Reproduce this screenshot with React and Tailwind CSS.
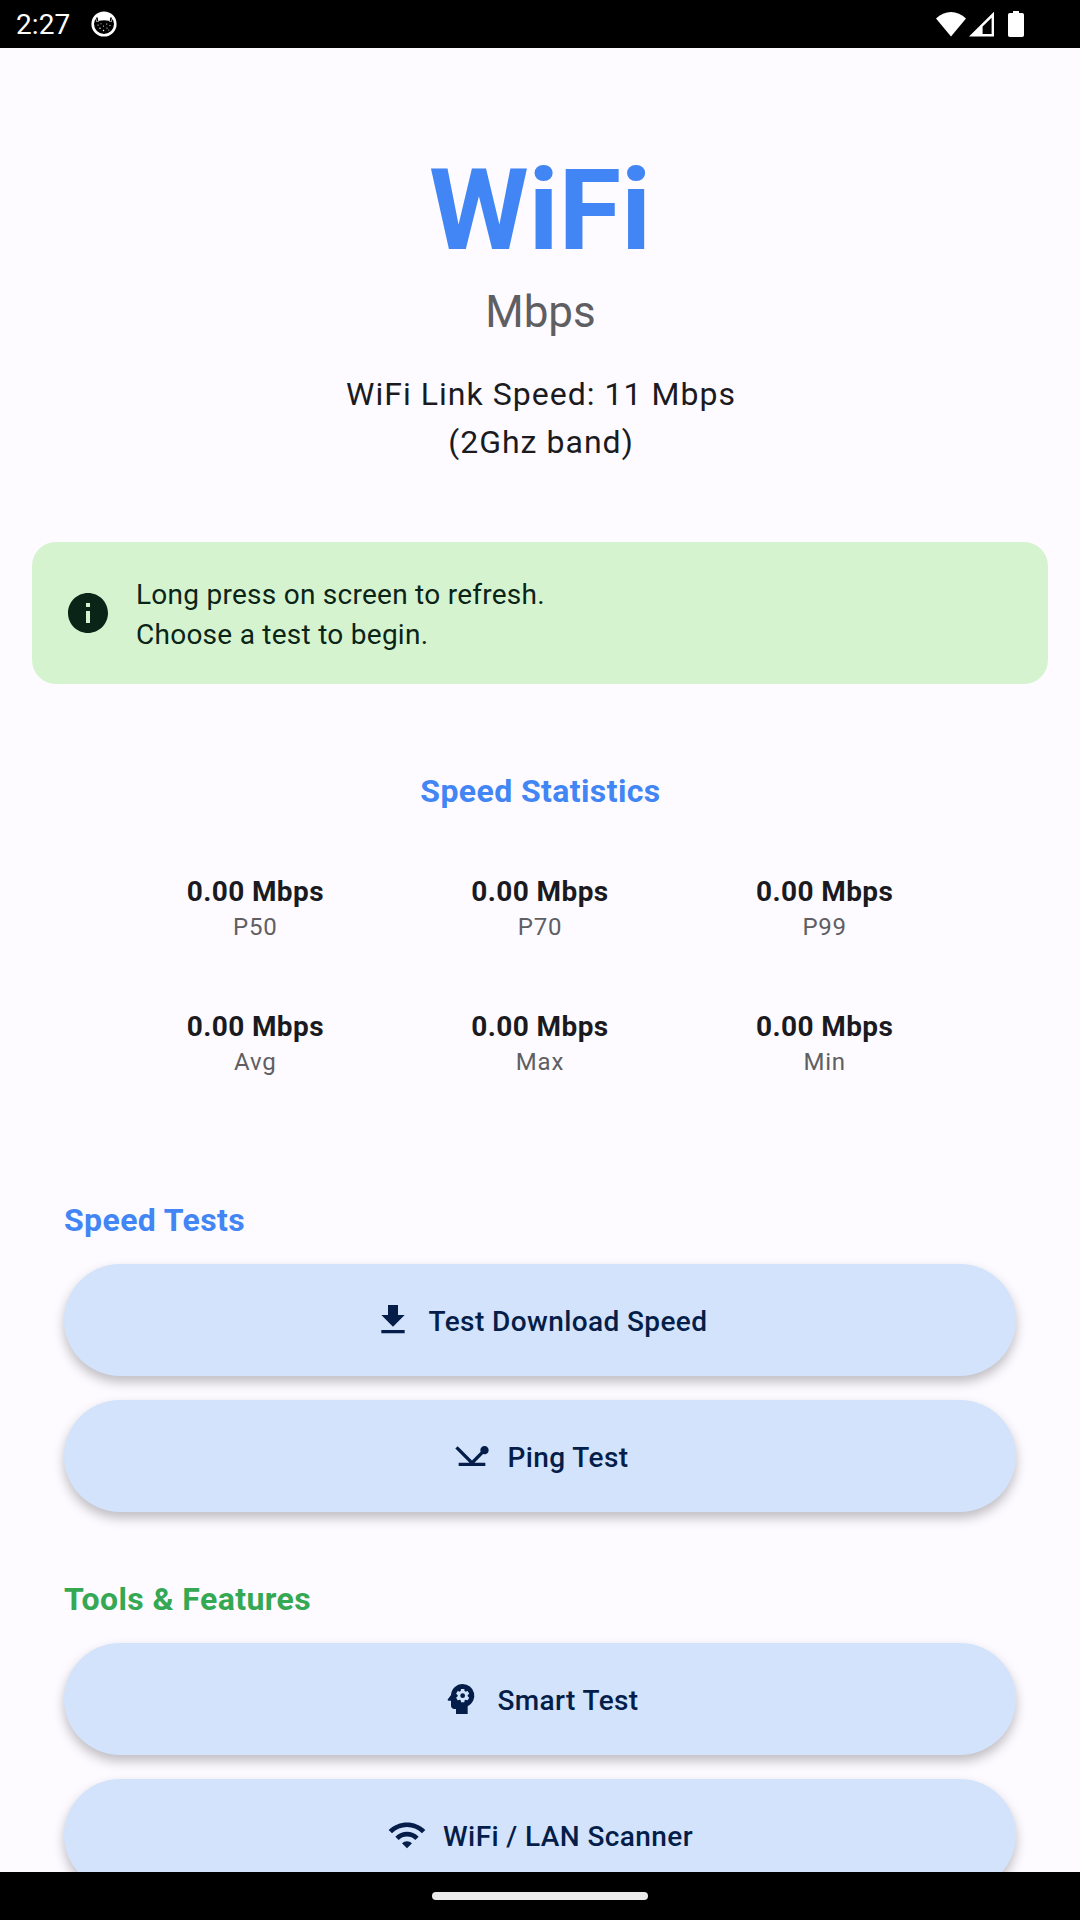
import React from "react";
import { MdInfo, MdFileDownload, MdNetworkPing, MdPsychology, MdWifi } from "react-icons/md";

function StatusBar() {
  return (
    <header className="flex h-12 shrink-0 items-center justify-between bg-black pl-4 pr-14 text-white">
      <div className="flex items-center">
        <span className="w-[75px] pt-0.5 text-[28px] leading-[34px] tracking-[0.1px]">2:27</span>
        <svg className="h-[26px] w-[26px]" viewBox="0 0 26 26">
          <circle cx="13" cy="13" r="11.3" fill="black" stroke="white" strokeWidth="2.6" />
          <path d="M4 7 C8 0 18 0 22 7 L20.5 11 C19.5 11.3 18.5 11 17.8 9.7 Q13 8.6 8.2 9.7 C7.5 11 6.5 11.3 5.5 11 Z" fill="white" />
          <path d="M5.8 6.5l.8 4M20.2 6.5l-.8 4" stroke="black" strokeWidth="1.6" />
          <g fill="white">
            <circle cx="7" cy="14" r=".6" /><circle cx="10" cy="12.8" r=".5" />
            <circle cx="15.8" cy="13" r=".6" /><circle cx="19" cy="14.5" r=".6" />
            <circle cx="12.5" cy="15" r=".6" /><circle cx="9" cy="17.3" r=".7" />
            <circle cx="16" cy="17" r=".6" /><circle cx="12.5" cy="19.5" r=".7" />
            <circle cx="17.8" cy="19" r=".5" />
          </g>
        </svg>
      </div>
      <div className="flex items-center">
        <svg className="h-[26px] w-[30px]" viewBox="0 0 30 26">
          <path d="M0 7.5C8.500-1.3 21.5-1.3 30 7.5L15 25.5z" fill="white" />
        </svg>
        <svg className="ml-[3px] h-[26px] w-[25px]" viewBox="0 0 25 26">
          <path fillRule="evenodd" d="M0 25.5L25 .7V25.5zM13.6 23H22.6V6.8L13.6 15.6z" fill="white" />
        </svg>
        <svg className="ml-[14px] h-[26px] w-4" viewBox="0 0 16 26">
          <path d="M5 0h6v2h3.2A1.8 1.8 0 0 1 16 3.8v20.4A1.8 1.8 0 0 1 14.2 26H1.8A1.8 1.8 0 0 1 0 24.2V3.8A1.8 1.8 0 0 1 1.8 2H5z" fill="white" />
        </svg>
      </div>
    </header>
  );
}

function Stat({ label }) {
  return (
    <div className="flex flex-col items-center">
      <span className="-mb-px pt-px text-[28px] font-bold leading-10 tracking-[0.4px] text-[#1b1b1f]">0.00 Mbps</span>
      <span className="text-2xl leading-8 tracking-[0.8px] text-[#5f5f63]">{label}</span>
    </div>
  );
}

function ActionButton({ icon: Icon, children }) {
  return (
    <button className="flex h-28 w-full shrink-0 items-center justify-center gap-4 rounded-full bg-[#d3e3fc] text-[28px] font-medium leading-10 tracking-[0.4px] text-[#041e49] shadow-[0_6px_12px_rgba(0,0,0,0.25)]">
      <Icon className="h-10 w-10" />
      <span className="pt-[3px]">{children}</span>
    </button>
  );
}

export default function App() {
  return (
    <div className="flex h-[1920px] w-[1080px] flex-col overflow-hidden bg-[#fdfbff] font-['Roboto',sans-serif] text-[#1b1b1f]">
      <StatusBar />
      <main className="flex min-h-0 flex-1 flex-col overflow-hidden">
        <section className="flex flex-col items-center pt-[98px] text-center">
          <h1 className="text-[114px] font-bold leading-[128px] tracking-[-0.2px] text-[#4285f4]">WiFi</h1>
          <p className="mt-[10px] pl-px text-[44px] leading-[56px] text-[#5f5f63]">Mbps</p>
          <p className="mt-[30px] pl-0.5 text-[32px] leading-[48px] tracking-[1.02px]">
            WiFi Link Speed: 11 Mbps<br />(2Ghz band)
          </p>
        </section>

        <section className="mx-8 mt-[76px] flex h-[142px] shrink-0 items-center gap-6 rounded-3xl bg-[#d6f3d0] px-8 text-[#0a2417]">
          <MdInfo className="h-12 w-12" />
          <p className="pt-[3px] text-[28px] leading-10 tracking-[0.26px]">
            Long press on screen to refresh.<br />Choose a test to begin.
          </p>
        </section>

        <section className="mt-[83px]">
          <h2 className="pl-px text-center text-[32px] font-bold leading-[48px] tracking-[0.4px] text-[#4285f4]">Speed Statistics</h2>
          <div className="mt-14 grid grid-cols-3 gap-y-[63px] px-[113px]">
            <Stat label="P50" />
            <Stat label="P70" />
            <Stat label="P99" />
            <Stat label="Avg" />
            <Stat label="Max" />
            <Stat label="Min" />
          </div>
        </section>

        <section className="mt-[118px] flex flex-col px-16">
          <h2 className="text-[32px] font-bold leading-[48px] tracking-[0.4px] text-[#4285f4]">Speed Tests</h2>
          <div className="mt-5 flex flex-col gap-6">
            <ActionButton icon={MdFileDownload}>Test Download Speed</ActionButton>
            <ActionButton icon={MdNetworkPing}>Ping Test</ActionButton>
          </div>
        </section>

        <section className="mt-[63px] flex flex-col px-16">
          <h2 className="text-[32px] font-bold leading-[48px] tracking-[0.4px] text-[#34a853]">Tools &amp; Features</h2>
          <div className="mt-5 flex flex-col gap-6">
            <ActionButton icon={MdPsychology}>Smart Test</ActionButton>
            <ActionButton icon={MdWifi}>WiFi / LAN Scanner</ActionButton>
          </div>
        </section>
      </main>
      <footer className="flex h-12 shrink-0 items-center justify-center bg-black">
        <div className="h-2 w-[216px] rounded-full bg-[#ebebeb]" />
      </footer>
    </div>
  );
}
